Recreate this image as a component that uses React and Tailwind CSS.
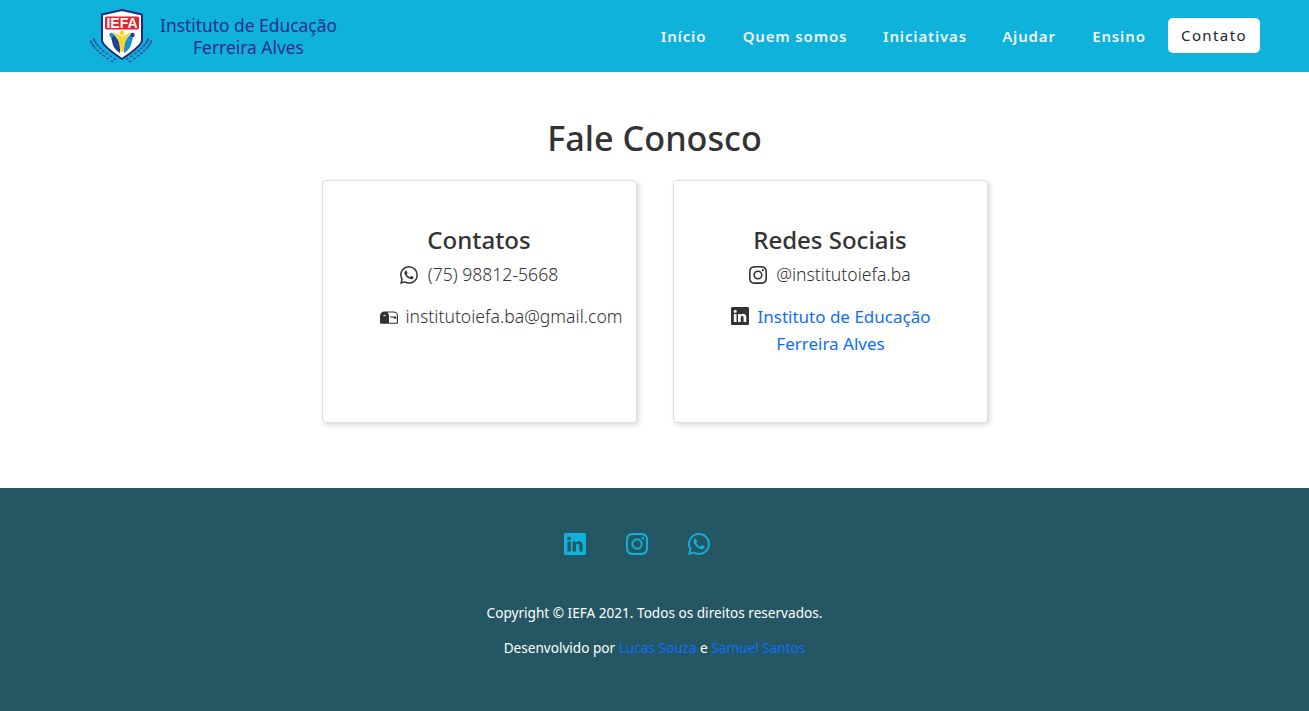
import React from "react";
import { BsWhatsapp, BsInstagram, BsLinkedin, BsMailbox2 } from "react-icons/bs";

function Logo() {
  const leaves = [0, 1, 2, 3, 4, 5, 6, 7, 8];
  return (
    <svg width="64" height="56" viewBox="0 0 64 56" className="shrink-0">
      {leaves.map((i) => {
        const t = i / 8;
        const x = 2 + t * 6 + t * t * 15;
        const y = 32 + t * 17 + t * t * 3;
        return (
          <g key={i} fill="#2c3f94" opacity="0.85">
            <ellipse cx={x - 1.1} cy={y + 1.3} rx="1.5" ry="0.85" transform={`rotate(${45 - t * 35} ${x - 1.1} ${y + 1.3})`} />
            <ellipse cx={x + 1.8} cy={y - 0.9} rx="1.5" ry="0.85" transform={`rotate(${45 - t * 35} ${x + 1.8} ${y - 0.9})`} />
            <ellipse cx={62 - x + 1.1} cy={y + 1.3} rx="1.5" ry="0.85" transform={`rotate(${-45 + t * 35} ${63.1 - x} ${y + 1.3})`} />
            <ellipse cx={62 - x - 1.8} cy={y - 0.9} rx="1.5" ry="0.85" transform={`rotate(${-45 + t * 35} ${60.2 - x} ${y - 0.9})`} />
          </g>
        );
      })}
      <path d="M12 6.5 L32 2 L52 6.5 L52 33 Q50 39 32 51 Q14 39 12 33 Z" fill="#fff" stroke="#1d2a82" strokeWidth="2" strokeLinejoin="round" />
      <path d="M15 10 Q15 8.5 17 8.5 L47 8.5 Q49 8.5 49 10 L49 20 Q49 21.5 47 21.5 L17 21.5 Q15 21.5 15 20 Z" fill="#e8202f" />
      <text x="32" y="19.6" textAnchor="middle" fontFamily="Liberation Sans, sans-serif" fontWeight="700" fontSize="14" fill="#fff">IEFA</text>
      <path d="M22 33 Q20 28 23 26 Q27 29 30 36 L30 45 Q23 41 22 33 Z" fill="#1d3f9a" />
      <path d="M42 33 Q44 28 41 26 Q37 29 34 36 L34 45 Q41 41 42 33 Z" fill="#1d8fc7" />
      <path d="M23 24 L32 28.5 L41 24 L35.5 32 L33.5 44 L30.5 44 L28.5 32 Z" fill="#f4d62c" />
      <circle cx="32" cy="25" r="2.4" fill="#f4d62c" />
      <circle cx="21.5" cy="27" r="2.2" fill="#1d8fc7" />
      <circle cx="42.5" cy="27" r="2.2" fill="#1d3f9a" />
    </svg>
  );
}

function Header() {
  const links = [
    ["Início", "w-[45px]"],
    ["Quem somos", "w-[106px]"],
    ["Iniciativas", "w-[82px]"],
    ["Ajudar", "w-[54px]"],
    ["Ensino", "w-[54px]"],
  ];
  return (
    <header className="h-[72px] bg-[#0eb2da] flex items-center justify-between pl-[90px] pr-[49px]">
      <a className="flex items-center gap-[6px] -mt-[1px]">
        <Logo />
        <span className="text-[#2b2e8c] text-[17.4px] leading-[22px] text-center">
          Instituto de Educação
          <br />
          Ferreira Alves
        </span>
      </a>
      <nav className="flex items-center gap-[36px] text-[15px] font-semibold tracking-[0.85px] text-[#f2f6f8]">
        {links.map(([l, w]) => (
          <a key={l} className={`${w} whitespace-nowrap flex justify-center`}>
            {l}
          </a>
        ))}
        <a className="-ml-[14px] -mt-[2px] h-[35px] w-[92px] flex items-center justify-center bg-white rounded-[5px] text-[#212529] font-normal tracking-[1.4px]">
          Contato
        </a>
      </nav>
    </header>
  );
}

function Card({ title, children }) {
  return (
    <div className="w-[315px] h-[243px] bg-white border border-[#dedede] rounded-[4px] shadow-[2px_2px_5px_rgba(0,0,0,0.15)] pt-[43px] text-center text-[#333]">
      <h3 className="text-[24px] leading-[32px] font-medium text-[#333]">{title}</h3>
      {children}
    </div>
  );
}

export default function App() {
  return (
    <div className="min-h-[711px] bg-white flex flex-col font-['Noto_Sans','Open_Sans',sans-serif] text-[#333]">
      <Header />
      <main className="h-[416px] flex flex-col items-center">
        <h1 className="mt-[43px] text-[34.2px] leading-[46px] font-medium text-[#333]">Fale Conosco</h1>
        <div className="mt-[19px] flex gap-[36px] text-[17.6px] leading-[27px] font-light">
          <Card title="Contatos">
            <p className="mt-[5px] flex justify-center items-center gap-[10px]">
              <BsWhatsapp className="text-[18px]" /> (75) 98812-5668
            </p>
            <p className="mt-[15px] flex items-center gap-[8px] pl-[57px] whitespace-nowrap">
              <BsMailbox2 className="text-[18px]" /> institutoiefa.ba@gmail.com
            </p>
          </Card>
          <Card title="Redes Sociais">
            <p className="mt-[5px] flex justify-center items-center gap-[9px]">
              <BsInstagram className="text-[18px]" /> @institutoiefa.ba
            </p>
            <p className="mt-[15px] pl-[1px]">
              <BsLinkedin className="text-[18px] inline-block align-[-2px] mr-[9px]" />
              <a className="text-[#0d6efd] font-normal text-[17px]">
                Instituto de Educação
                <br />
                Ferreira Alves
              </a>
            </p>
          </Card>
        </div>
      </main>
      <footer className="h-[223px] bg-[#245763] flex flex-col items-center text-white text-[13.6px]">
        <div className="mt-[45px] mr-[36px] flex gap-[40px] text-[22px] text-[#0eb2da] h-[22px]">
          <BsLinkedin />
          <BsInstagram />
          <BsWhatsapp />
        </div>
        <p className="mt-[47px] leading-[21px]">Copyright © IEFA 2021. Todos os direitos reservados.</p>
        <p className="mt-[14px] leading-[21px]">
          Desenvolvido por <a className="text-[#0d6efd]">Lucas Souza</a> e <a className="text-[#0d6efd]">Samuel Santos</a>
        </p>
      </footer>
    </div>
  );
}
